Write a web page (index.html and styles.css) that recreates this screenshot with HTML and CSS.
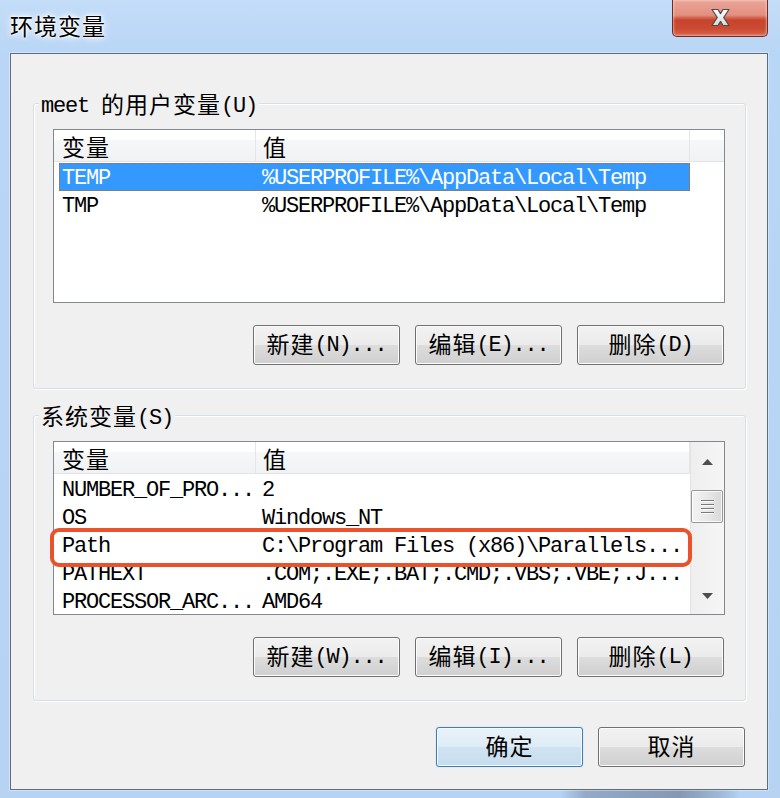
FILE: index.html
```html
<!DOCTYPE html>
<html lang="zh-CN">
<head>
<meta charset="utf-8">
<title>环境变量</title>
<link rel="stylesheet" href="styles.css">
</head>
<body>
<div class="window">
  <div class="titlebar">
    <div class="title">环境变量</div>
    <div class="close" aria-label="关闭">
      <svg width="21" height="19" viewBox="0 0 21 19">
        <defs>
          <linearGradient id="xg" x1="0" y1="0" x2="0" y2="1">
            <stop offset="0" stop-color="#ffffff"/>
            <stop offset="1" stop-color="#d8d8d8"/>
          </linearGradient>
        </defs>
        <path d="M2,1.5 H8 L10.5,5.6 L13,1.5 H19 L13.7,9.5 L19,17.5 H13 L10.5,13.4 L8,17.5 H2 L7.3,9.5 Z" fill="url(#xg)" stroke="#4a4a4a" stroke-width="1.2" stroke-linejoin="round"/>
      </svg>
    </div>
  </div>
  <div class="client">
    <div class="group">
      <div class="legend">meet <span class="zh">的用户变量</span>(U)</div>
      <div class="list">
        <div class="lmain full">
          <div class="lhead">
            <div class="hc c1"><span class="zh">变量</span></div>
            <div class="hc c2"><span class="zh">值</span></div>
            <div class="hc cfill"></div>
          </div>
          <div class="rows">
            <div class="row sel"><span class="k">TEMP</span><span class="v">%USERPROFILE%\AppData\Local\Temp</span></div>
            <div class="row"><span class="k">TMP</span><span class="v">%USERPROFILE%\AppData\Local\Temp</span></div>
          </div>
        </div>
      </div>
      <div class="btns">
        <button class="btn"><span class="zh">新建</span>(N)...</button>
        <button class="btn"><span class="zh">编辑</span>(E)...</button>
        <button class="btn"><span class="zh">删除</span>(D)</button>
      </div>
    </div>

    <div class="group g2">
      <div class="legend"><span class="zh">系统变量</span>(S)</div>
      <div class="list">
        <div class="lmain">
          <div class="lhead">
            <div class="hc c1"><span class="zh">变量</span></div>
            <div class="hc c2"><span class="zh">值</span></div>
          </div>
          <div class="rows">
            <div class="row"><span class="k">NUMBER_OF_PRO...</span><span class="v">2</span></div>
            <div class="row"><span class="k">OS</span><span class="v">Windows_NT</span></div>
            <div class="row"><span class="k">Path</span><span class="v">C:\Program Files (x86)\Parallels...</span></div>
            <div class="row"><span class="k">PATHEXT</span><span class="v">.COM;.EXE;.BAT;.CMD;.VBS;.VBE;.J...</span></div>
            <div class="row"><span class="k">PROCESSOR_ARC...</span><span class="v">AMD64</span></div>
          </div>
        </div>
        <div class="sb">
          <div class="sb-up">
            <svg width="11" height="6" viewBox="0 0 11 6"><polygon points="0,6 5.5,0 11,6" fill="#4d4d4d"/></svg>
          </div>
          <div class="thumb">
            <svg width="13" height="15" viewBox="0 0 13 15">
              <rect x="0" y="1" width="13" height="1" fill="#7a7a7a"/>
              <rect x="0" y="2" width="13" height="1" fill="#fbfbfb"/>
              <rect x="0" y="5" width="13" height="1" fill="#7a7a7a"/>
              <rect x="0" y="6" width="13" height="1" fill="#fbfbfb"/>
              <rect x="0" y="9" width="13" height="1" fill="#7a7a7a"/>
              <rect x="0" y="10" width="13" height="1" fill="#fbfbfb"/>
              <rect x="0" y="13" width="13" height="1" fill="#7a7a7a"/>
              <rect x="0" y="14" width="13" height="1" fill="#fbfbfb"/>
            </svg>
          </div>
          <div class="sb-track"></div>
          <div class="sb-down">
            <svg width="11" height="6" viewBox="0 0 11 6"><polygon points="0,0 11,0 5.5,6" fill="#4d4d4d"/></svg>
          </div>
        </div>
        <div class="mark"></div>
      </div>
      <div class="btns">
        <button class="btn"><span class="zh">新建</span>(W)...</button>
        <button class="btn"><span class="zh">编辑</span>(I)...</button>
        <button class="btn"><span class="zh">删除</span>(L)</button>
      </div>
    </div>

    <div class="footer">
      <button class="btn default"><span class="zh">确定</span></button>
      <button class="btn"><span class="zh">取消</span></button>
    </div>
  </div>
</div>
</body>
</html>
```

FILE: styles.css
```css
html, body {
  margin: 0;
  padding: 0;
}

body {
  width: 780px;
  height: 798px;
  overflow: hidden;
  font-family: "Liberation Mono", "Noto Sans CJK SC", monospace;
  font-size: 22px;
  letter-spacing: -1.2px;
  color: #000;
  background:
    linear-gradient(90deg, transparent 560px, rgba(95, 110, 132, 0.4) 585px, rgba(80, 94, 114, 0.5) 680px, rgba(120, 138, 160, 0.3) 725px, transparent 740px) left bottom / 100% 8px no-repeat,
    linear-gradient(180deg, #c3dcf8 0, #b9d6f6 55px, #b6d3f4 100%);
}

.zh {
  display: inline-block;
  font-family: "Noto Sans CJK SC", sans-serif;
  font-size: 23px;
  letter-spacing: 1px;
  line-height: 26px;
  vertical-align: -1px;
}

.window {
  width: 780px;
  height: 798px;
}

/* ---------- title bar ---------- */
.titlebar {
  height: 53px;
  display: flex;
  justify-content: space-between;
  align-items: flex-start;
}

.title {
  margin: 8px 0 0 10px;
  font-family: "Noto Sans CJK SC", sans-serif;
  font-size: 23px;
  letter-spacing: 1px;
  line-height: 34px;
  color: #000;
  text-shadow: 0 0 10px #fff, 0 0 6px #fff, 0 0 3px #fff, 0 0 2px #fff;
}

.close {
  width: 96px;
  height: 37px;
  margin-right: 12px;
  box-sizing: border-box;
  border: 1px solid #6e2c22;
  border-top: none;
  border-radius: 0 0 5px 5px;
  background: linear-gradient(180deg, #eaa598 0%, #e38f80 42%, #d2604b 50%, #c7432c 56%, #cc4a33 80%, #d9654d 100%);
  box-shadow: inset 0 0 2px 1px rgba(255, 220, 210, 0.55);
  display: flex;
  align-items: center;
  justify-content: center;
}

.close svg {
  display: block;
  margin-top: -1px;
}

/* ---------- client area ---------- */
.client {
  margin-left: 10px;
  width: 758px;
  height: 737px;
  box-sizing: border-box;
  border: 1px solid #616c7b;
  background: #f0f0f0;
  padding: 49px 21px 0 22px;
  box-shadow: 0 0 0 1px rgba(255, 255, 255, 0.35);
}

.group {
  position: relative;
  height: 286px;
  box-sizing: border-box;
  border: 1px solid #d5dfe5;
  border-radius: 3px;
  box-shadow: inset 1px 1px 0 #fff, 1px 1px 0 #fff;
  padding: 25px 20px 0 19px;
}

.g2 {
  margin-top: 26px;
}

.legend {
  position: absolute;
  left: 5px;
  top: -14px;
  padding: 0 2px;
  height: 28px;
  line-height: 28px;
  background: #f0f0f0;
  white-space: nowrap;
}

/* ---------- list view ---------- */
.list {
  position: relative;
  width: 672px;
  height: 174px;
  box-sizing: border-box;
  border: 1px solid #828790;
  background: #fff;
  display: flex;
}

.lmain {
  width: 636px;
  display: flex;
  flex-direction: column;
  overflow: hidden;
}

.lmain.full {
  width: 670px;
}

.lhead {
  display: flex;
  height: 32px;
  flex: none;
}

.hc {
  box-sizing: border-box;
  height: 32px;
  border-bottom: 1px solid #e0e3e8;
  border-right: 1px solid #e3e5e8;
  background: linear-gradient(180deg, #ffffff 0, #ffffff 10px, #f6f7f9 10px, #f1f2f4 100%);
  padding-top: 3px;
  line-height: 28px;
  white-space: nowrap;
}

.hc .zh {
  vertical-align: -2px;
}

.hc.c1 {
  width: 202px;
  padding-left: 8px;
}

.hc.c2 {
  width: 434px;
  padding-left: 7px;
}

.hc.cfill {
  flex: 1;
  border-right: none;
}

.rows {
  flex: 1;
  padding-top: 1px;
  overflow: hidden;
}

.row {
  display: flex;
  width: 631px;
  height: 28px;
  line-height: 25px;
  padding-top: 3px;
  margin-left: 5px;
  box-sizing: border-box;
  white-space: nowrap;
}

.row .k {
  width: 196px;
  padding-left: 3px;
  box-sizing: border-box;
  flex: none;
}

.row .v {
  padding-left: 7px;
}

.row.sel {
  background: #3399ff;
  color: #fff;
  outline: 1px dotted #cc6600;
  outline-offset: -1px;
}

/* ---------- scrollbar ---------- */
.sb {
  width: 34px;
  display: flex;
  flex-direction: column;
  align-items: center;
  background: linear-gradient(90deg, #e3e3e3 0, #e3e3e3 1px, #eeeeee 1px, #f6f6f6 100%);
}

.sb-up {
  height: 40px;
  flex: none;
  display: flex;
  align-items: center;
  justify-content: center;
}

.sb-down {
  height: 36px;
  flex: none;
  display: flex;
  align-items: center;
  justify-content: center;
}

.sb-up svg,
.sb-down svg {
  display: block;
}

.sb-track {
  flex: 1;
}

.thumb {
  margin-top: 8px;
  width: 32px;
  height: 33px;
  box-sizing: border-box;
  border: 1px solid #979797;
  border-radius: 2px;
  background: linear-gradient(90deg, #f4f4f4 0%, #e8e8e8 50%, #d8d8d8 100%);
  box-shadow: inset 0 0 0 1px rgba(255, 255, 255, 0.8);
  display: flex;
  align-items: center;
  justify-content: center;
  flex: none;
}

.thumb svg {
  display: block;
}

/* annotation drawn over the Path row */
.mark {
  position: absolute;
  left: -4px;
  top: 86px;
  width: 642px;
  height: 39px;
  box-sizing: border-box;
  border: 4px solid #e9532b;
  border-radius: 9px;
  pointer-events: none;
}

/* ---------- buttons ---------- */
.btns {
  margin-top: 22px;
  margin-right: 1px;
  display: flex;
  justify-content: flex-end;
  gap: 15px;
}

.footer {
  margin-top: 26px;
  margin-right: 1px;
  display: flex;
  justify-content: flex-end;
  gap: 15px;
}

.btn {
  width: 147px;
  height: 40px;
  box-sizing: border-box;
  padding: 2px 0 0;
  margin: 0;
  font-family: inherit;
  font-size: inherit;
  letter-spacing: inherit;
  color: #000;
  border: 1px solid #707070;
  border-radius: 3px;
  background: linear-gradient(180deg, #f2f2f2 0%, #ebebeb 50%, #dddddd 50%, #cfcfcf 100%);
  box-shadow: inset 0 0 0 1px #fcfcfc;
  line-height: 34px;
  white-space: nowrap;
}

.btn .zh {
  vertical-align: -2px;
}

.btn.default {
  border-color: #3c7fb1;
  background: linear-gradient(180deg, #e8f2fa 0%, #deebf6 50%, #d0e3f1 50%, #c6ddee 100%);
  box-shadow: inset 0 0 0 1px #f4fafe, 0 0 1px #7fb7e6;
}
```
